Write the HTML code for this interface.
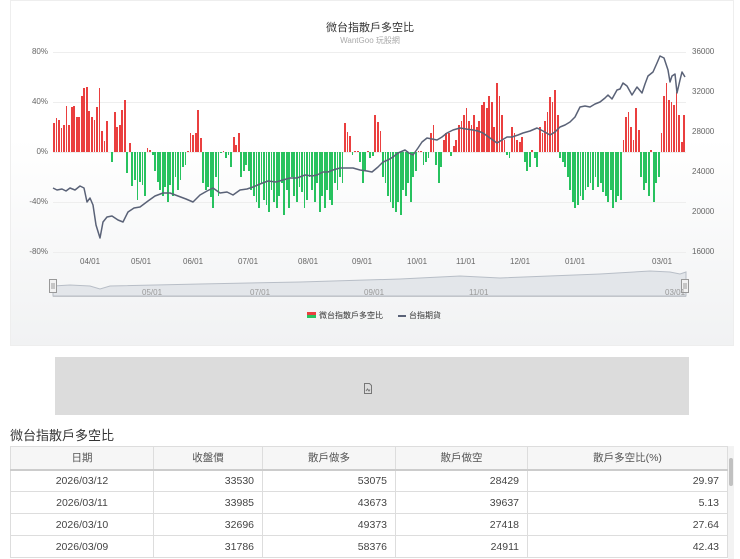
<!DOCTYPE html>
<html><head><meta charset="utf-8"><style>
*{margin:0;padding:0;box-sizing:border-box}
body{width:740px;height:559px;overflow:hidden;background:#fff;font-family:"Liberation Sans","Noto Sans CJK TC",sans-serif;position:relative}
.chart{position:absolute;left:10px;top:0;width:724px;height:346px;border:1px solid #eee;background:linear-gradient(#fff 0%,#fff 40%,#f1f2f3 100%)}
.t{position:absolute;font-size:9px;color:#666;white-space:nowrap}
.bars{position:absolute;left:53px;top:52px;width:633px;height:200px;display:flex;justify-content:space-between}
.bars i{display:block;width:1.8px;height:200px;position:relative}
.bars i::before{content:"";position:absolute;left:0;right:0;bottom:100px;height:calc(max(var(--v),0)*1.25px);background:#ea3f3f}
.bars i::after{content:"";position:absolute;left:0;right:0;top:100px;height:calc(max(var(--v)*-1,0)*1.25px);background:#27c25f}
table{position:absolute;left:10px;top:446px;width:718px;border-collapse:collapse;font-size:10.5px;color:#444}
td,th{border:1px solid #ddd;height:22px;font-weight:normal}
th{background:#f6f6f6;color:#555;border-bottom:2px solid #ccc;height:23px}
td{text-align:right;padding-right:8px}
td:first-child{text-align:center;padding:0}
</style></head><body>
<div class="chart"></div>
<svg style="position:absolute;left:0;top:0" width="740" height="346">
<g stroke="#eeeeee" stroke-width="1">
<line x1="53" x2="686" y1="52.5" y2="52.5"/><line x1="53" x2="686" y1="102.5" y2="102.5"/><line x1="53" x2="686" y1="152.5" y2="152.5"/><line x1="53" x2="686" y1="202.5" y2="202.5"/><line x1="53" x2="686" y1="252.5" y2="252.5"/>
</g>
</svg>
<div class="bars">
<i style="--v:23"></i><i style="--v:27"></i><i style="--v:26"></i><i style="--v:19"></i><i style="--v:22"></i><i style="--v:37"></i><i style="--v:22"></i><i style="--v:36"></i><i style="--v:37"></i><i style="--v:28"></i><i style="--v:28"></i><i style="--v:45"></i><i style="--v:51"></i><i style="--v:52"></i><i style="--v:33"></i><i style="--v:28"></i><i style="--v:26"></i><i style="--v:36"></i><i style="--v:51"></i><i style="--v:17"></i><i style="--v:9"></i><i style="--v:25"></i><i style="--v:0"></i>
<i style="--v:-8"></i><i style="--v:32"></i><i style="--v:20"></i><i style="--v:22"></i><i style="--v:34"></i><i style="--v:42"></i><i style="--v:-17"></i><i style="--v:7"></i><i style="--v:-27"></i><i style="--v:-22"></i><i style="--v:-38"></i><i style="--v:-24"></i><i style="--v:-26"></i><i style="--v:-35"></i>
<i style="--v:3"></i><i style="--v:2"></i><i style="--v:-2"></i><i style="--v:-15"></i><i style="--v:-24"></i><i style="--v:-30"></i><i style="--v:-35"></i><i style="--v:-28"></i><i style="--v:-40"></i><i style="--v:-26"></i><i style="--v:-35"></i><i style="--v:-20"></i><i style="--v:-30"></i><i style="--v:-22"></i><i style="--v:-12"></i><i style="--v:-10"></i>
<i style="--v:1"></i><i style="--v:15"></i><i style="--v:14"></i><i style="--v:15"></i><i style="--v:34"></i><i style="--v:11"></i>
<i style="--v:-25"></i><i style="--v:-30"></i><i style="--v:-28"></i><i style="--v:-36"></i><i style="--v:-45"></i><i style="--v:-20"></i><i style="--v:-35"></i><i style="--v:-1"></i><i style="--v:1"></i><i style="--v:-5"></i><i style="--v:-2"></i><i style="--v:-12"></i>
<i style="--v:12"></i><i style="--v:6"></i><i style="--v:15"></i><i style="--v:-20"></i><i style="--v:-15"></i><i style="--v:-10"></i>
<i style="--v:-15"></i><i style="--v:-30"></i><i style="--v:-35"></i><i style="--v:-40"></i><i style="--v:-45"></i><i style="--v:-25"></i><i style="--v:-38"></i><i style="--v:-42"></i><i style="--v:-48"></i><i style="--v:-30"></i><i style="--v:-40"></i><i style="--v:-45"></i><i style="--v:-35"></i><i style="--v:-25"></i><i style="--v:-50"></i><i style="--v:-30"></i><i style="--v:-45"></i><i style="--v:-20"></i><i style="--v:-35"></i><i style="--v:-40"></i><i style="--v:-28"></i><i style="--v:-32"></i><i style="--v:-45"></i><i style="--v:-38"></i><i style="--v:-20"></i><i style="--v:-30"></i><i style="--v:-40"></i><i style="--v:-25"></i><i style="--v:-48"></i><i style="--v:-35"></i><i style="--v:-45"></i><i style="--v:-30"></i><i style="--v:-38"></i><i style="--v:-42"></i><i style="--v:-25"></i><i style="--v:-30"></i><i style="--v:-20"></i><i style="--v:-25"></i>
<i style="--v:23"></i><i style="--v:16"></i><i style="--v:13"></i><i style="--v:-2"></i><i style="--v:1"></i><i style="--v:1"></i>
<i style="--v:-8"></i><i style="--v:-25"></i><i style="--v:-15"></i><i style="--v:1"></i><i style="--v:-5"></i><i style="--v:-3"></i>
<i style="--v:30"></i><i style="--v:24"></i><i style="--v:17"></i>
<i style="--v:-20"></i><i style="--v:-25"></i><i style="--v:-35"></i><i style="--v:-40"></i><i style="--v:-45"></i><i style="--v:-48"></i><i style="--v:-40"></i><i style="--v:-50"></i><i style="--v:-30"></i><i style="--v:-35"></i><i style="--v:-25"></i><i style="--v:-40"></i><i style="--v:-20"></i><i style="--v:-15"></i>
<i style="--v:1"></i><i style="--v:1"></i><i style="--v:-10"></i><i style="--v:-8"></i><i style="--v:-5"></i><i style="--v:15"></i><i style="--v:22"></i><i style="--v:-10"></i><i style="--v:-25"></i><i style="--v:-12"></i>
<i style="--v:10"></i><i style="--v:15"></i><i style="--v:15"></i><i style="--v:-3"></i><i style="--v:5"></i>
<i style="--v:10"></i><i style="--v:22"></i><i style="--v:25"></i><i style="--v:30"></i><i style="--v:35"></i><i style="--v:25"></i><i style="--v:22"></i><i style="--v:30"></i><i style="--v:20"></i><i style="--v:25"></i><i style="--v:38"></i><i style="--v:40"></i><i style="--v:35"></i><i style="--v:45"></i><i style="--v:40"></i><i style="--v:20"></i><i style="--v:55"></i><i style="--v:45"></i><i style="--v:30"></i><i style="--v:10"></i>
<i style="--v:-2"></i><i style="--v:-5"></i><i style="--v:20"></i><i style="--v:15"></i><i style="--v:10"></i><i style="--v:8"></i><i style="--v:12"></i><i style="--v:-8"></i><i style="--v:-15"></i><i style="--v:-12"></i><i style="--v:2"></i><i style="--v:-5"></i><i style="--v:-12"></i>
<i style="--v:20"></i><i style="--v:15"></i><i style="--v:25"></i><i style="--v:32"></i><i style="--v:44"></i><i style="--v:40"></i><i style="--v:50"></i><i style="--v:30"></i>
<i style="--v:-5"></i><i style="--v:-8"></i><i style="--v:-12"></i><i style="--v:-20"></i><i style="--v:-30"></i><i style="--v:-40"></i><i style="--v:-45"></i><i style="--v:-42"></i><i style="--v:-35"></i><i style="--v:-38"></i><i style="--v:-30"></i><i style="--v:-28"></i><i style="--v:-25"></i><i style="--v:-30"></i><i style="--v:-20"></i><i style="--v:-28"></i><i style="--v:-25"></i><i style="--v:-32"></i><i style="--v:-35"></i><i style="--v:-40"></i><i style="--v:-30"></i><i style="--v:-45"></i><i style="--v:-40"></i><i style="--v:-35"></i><i style="--v:-38"></i>
<i style="--v:10"></i><i style="--v:28"></i><i style="--v:32"></i><i style="--v:20"></i><i style="--v:10"></i><i style="--v:35"></i><i style="--v:18"></i>
<i style="--v:-20"></i><i style="--v:-30"></i><i style="--v:-25"></i><i style="--v:-35"></i><i style="--v:2"></i><i style="--v:-40"></i><i style="--v:-25"></i><i style="--v:-20"></i>
<i style="--v:15"></i><i style="--v:45"></i><i style="--v:55"></i><i style="--v:42"></i><i style="--v:40"></i><i style="--v:38"></i><i style="--v:48"></i><i style="--v:30"></i><i style="--v:8"></i><i style="--v:30"></i>
</div>
<svg style="position:absolute;left:0;top:0" width="740" height="346">
<polyline fill="none" stroke="#5a6277" stroke-width="1.5" stroke-linejoin="round" points="53,188 57,190 62,189 66,191 70,188 75,190 80,186 84,188 87,202 90,198 93,205 96,225 100,238 103,222 107,217 112,216 118,220 123,222 128,212 134,208 140,207 148,201 155,196 163,193 170,193 178,196 186,199 193,202 200,195 207,191 213,188 220,193 227,192 233,195 240,190 247,189 253,187 260,184 268,181 276,182 283,180 290,178 297,178 305,175 312,176 317,175 323,172 328,172 333,170 340,168 347,168 353,168 360,170 367,171 372,172 378,167 383,162 388,160 393,157 398,153 405,150 409,153 413,155 418,148 422,142 427,138 432,139 437,140 442,137 447,133 453,130 460,128 466,129 473,130 478,131 483,133 490,138 497,143 502,140 507,137 512,137 518,135 523,133 530,131 537,128 543,131 550,135 555,132 560,127 565,125 570,122 575,117 580,107 585,106 590,107 595,104 600,102 605,98 608,95 612,99 617,90 620,89 623,83 627,86 632,95 637,87 642,93 645,84 648,76 653,72 657,63 660,56 664,58 668,70 670,82 672,76 675,74 677,93 680,80 682,72 685,77"/>
<line x1="53" x2="686" y1="296.5" y2="296.5" stroke="#ccc"/>
<path d="M53 286 L70 285 L90 286 L100 289 L110 286 L200 284 L300 282 L400 279 L460 276 L500 278 L600 274 L650 271 L670 272 L680 274 L686 272 L686 296 L53 296Z" fill="#e3e6ea" stroke="#b8bec7" stroke-width="1"/>
<rect x="49.5" y="279.5" width="7" height="13" fill="#f2f2f2" stroke="#999"/>
<line x1="52" x2="52" y1="283" y2="289" stroke="#999"/><line x1="54" x2="54" y1="283" y2="289" stroke="#999"/>
<rect x="681.5" y="279.5" width="7" height="13" fill="#f2f2f2" stroke="#999"/>
<line x1="684" x2="684" y1="283" y2="289" stroke="#999"/><line x1="686" x2="686" y1="283" y2="289" stroke="#999"/>
<rect x="307" y="312" width="9" height="3" fill="#ea3f3f"/><rect x="307" y="315" width="9" height="3" fill="#27c25f"/>
<line x1="398" x2="406" y1="316" y2="316" stroke="#5a6277" stroke-width="2"/>
</svg>
<div class="t" style="left:0;width:740px;text-align:center;top:19px;font-size:11px;color:#333">微台指散戶多空比</div>
<div class="t" style="left:0;width:740px;text-align:center;top:35px;font-size:8px;color:#aaa">WantGoo 玩股網</div>
<div class="t" style="left:20px;width:28px;text-align:right;top:47px;font-size:8px">80%</div>
<div class="t" style="left:20px;width:28px;text-align:right;top:97px;font-size:8px">40%</div>
<div class="t" style="left:20px;width:28px;text-align:right;top:147px;font-size:8px">0%</div>
<div class="t" style="left:20px;width:28px;text-align:right;top:197px;font-size:8px">-40%</div>
<div class="t" style="left:20px;width:28px;text-align:right;top:247px;font-size:8px">-80%</div>
<div class="t" style="left:692px;top:47px;font-size:8px">36000</div>
<div class="t" style="left:692px;top:87px;font-size:8px">32000</div>
<div class="t" style="left:692px;top:127px;font-size:8px">28000</div>
<div class="t" style="left:692px;top:167px;font-size:8px">24000</div>
<div class="t" style="left:692px;top:207px;font-size:8px">20000</div>
<div class="t" style="left:692px;top:247px;font-size:8px">16000</div>
<div class="t" style="left:80px;top:257px;font-size:8px">04/01</div>
<div class="t" style="left:131px;top:257px;font-size:8px">05/01</div>
<div class="t" style="left:183px;top:257px;font-size:8px">06/01</div>
<div class="t" style="left:238px;top:257px;font-size:8px">07/01</div>
<div class="t" style="left:298px;top:257px;font-size:8px">08/01</div>
<div class="t" style="left:352px;top:257px;font-size:8px">09/01</div>
<div class="t" style="left:407px;top:257px;font-size:8px">10/01</div>
<div class="t" style="left:456px;top:257px;font-size:8px">11/01</div>
<div class="t" style="left:510px;top:257px;font-size:8px">12/01</div>
<div class="t" style="left:565px;top:257px;font-size:8px">01/01</div>
<div class="t" style="left:652px;top:257px;font-size:8px">03/01</div>
<div class="t" style="left:142px;top:288px;font-size:8px;color:#999">05/01</div>
<div class="t" style="left:250px;top:288px;font-size:8px;color:#999">07/01</div>
<div class="t" style="left:364px;top:288px;font-size:8px;color:#999">09/01</div>
<div class="t" style="left:469px;top:288px;font-size:8px;color:#999">11/01</div>
<div class="t" style="left:665px;top:288px;font-size:8px;color:#999">03/01</div>
<div class="t" style="left:319px;top:310px;font-size:8px;color:#333">微台指散戶多空比</div>
<div class="t" style="left:409px;top:310px;font-size:8px;color:#333">台指期貨</div>
<div style="position:absolute;left:55px;top:357px;width:634px;height:58px;background:#dcdcdc"></div>
<svg style="position:absolute;left:363px;top:383px" width="10" height="12"><path d="M1.5 .5H6.5L8.5 2.5V10.5H1.5Z" fill="none" stroke="#777"/><path d="M3 8L4.5 6 6 8 7 6.5" fill="none" stroke="#777"/></svg>
<div class="t" style="left:10px;top:425px;font-size:13px;color:#333">微台指散戶多空比</div>
<table>
<tr><th style="width:143px">日期</th><th style="width:109px">收盤價</th><th style="width:133px">散戶做多</th><th style="width:132px">散戶做空</th><th>散戶多空比(%)</th></tr>
<tr><td>2026/03/12</td><td>33530</td><td>53075</td><td>28429</td><td>29.97</td></tr>
<tr><td>2026/03/11</td><td>33985</td><td>43673</td><td>39637</td><td>5.13</td></tr>
<tr><td>2026/03/10</td><td>32696</td><td>49373</td><td>27418</td><td>27.64</td></tr>
<tr><td>2026/03/09</td><td>31786</td><td>58376</td><td>24911</td><td>42.43</td></tr>
</table>
<div style="position:absolute;left:728px;top:446px;width:6px;height:113px;background:#f3f3f3"></div>
<div style="position:absolute;left:729px;top:458px;width:4px;height:28px;background:#c1c1c1;border-radius:2px"></div>
</body></html>
